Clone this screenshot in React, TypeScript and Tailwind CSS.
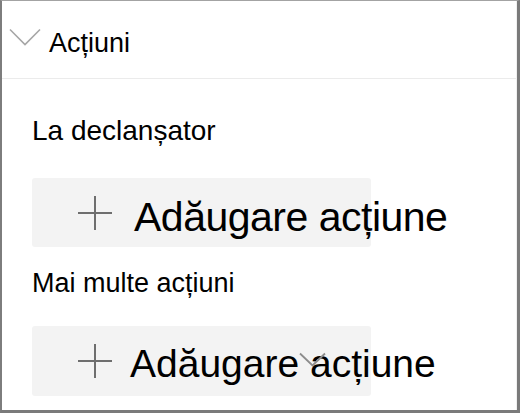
import React from "react";

const PlusIcon = () => (
  <svg width="36" height="36" viewBox="0 0 36 36" className="shrink-0 text-[#6e6e6e]">
    <path d="M18 1v34M1 18h34" stroke="currentColor" strokeWidth={2} fill="none" />
  </svg>
);

const AddButton = ({
  textClass,
  textOffset,
  children,
}: {
  textClass: string;
  textOffset: string;
  children?: React.ReactNode;
}) => {
  return (
    <div className="relative flex items-start w-[339px] h-full bg-[#f3f3f3] rounded-[3px]">
      <div className="ml-[45px] mt-[17px]">
        <PlusIcon />
      </div>
      <span className={`whitespace-nowrap leading-none text-black ${textClass} ${textOffset}`}>
        Adăugare acțiune
      </span>
      {children}
    </div>
  );
};

export default function App() {
  return (
    <div
      className="w-[520px] h-[413px] bg-white border-t border-l-2 border-r-[3px] border-b-[3px] border-t-[#a3a3a3] border-l-[#7d7d7d] border-r-[#7a7a7a] border-b-[#7a7a7a] overflow-hidden"
      style={{ fontFamily: '"Liberation Sans", Arial, sans-serif' }}
    >
      <div className="h-full border-r border-[#f0f0f0] flex flex-col">
        {/* Header */}
        <div className="h-[78px] flex items-start pt-[26px] pl-[7px] border-b border-[#ebebeb] shrink-0">
          <svg width="32" height="18" viewBox="0 0 32 18" className="mt-[1px] text-[#a6a6a6]">
            <path d="M1 1.5L16 16.5L31 1.5" stroke="currentColor" strokeWidth={1.6} fill="none" />
          </svg>
          <span className="ml-[8px] text-[27px] leading-[32px] text-black">Acțiuni</span>
        </div>

        {/* Body */}
        <div className="flex flex-col pl-[30px]">
          <div className="mt-[36px] text-[28px] leading-[32px] text-black">La declanșator</div>

          <div className="mt-[31px] h-[69px]">
            <AddButton textClass="text-[41px] tracking-[-0.5px] h-[41px]" textOffset="mt-[19px] ml-[21px]" />
          </div>

          <div className="mt-[20px] text-[27px] leading-[32px] text-black">Mai multe acțiuni</div>

          <div className="mt-[27px] h-[70px]">
            <AddButton textClass="text-[39px] h-[39px]" textOffset="mt-[18px] ml-[17px]">
              <svg
                width="27"
                height="15"
                viewBox="0 0 27 15"
                className="absolute left-[267px] top-[26px] text-[#8c8c8c]"
              >
                <path d="M1 1.5L13.5 13.5L26 1.5" stroke="currentColor" strokeWidth={1.8} fill="none" />
              </svg>
            </AddButton>
          </div>
        </div>
      </div>
    </div>
  );
}
